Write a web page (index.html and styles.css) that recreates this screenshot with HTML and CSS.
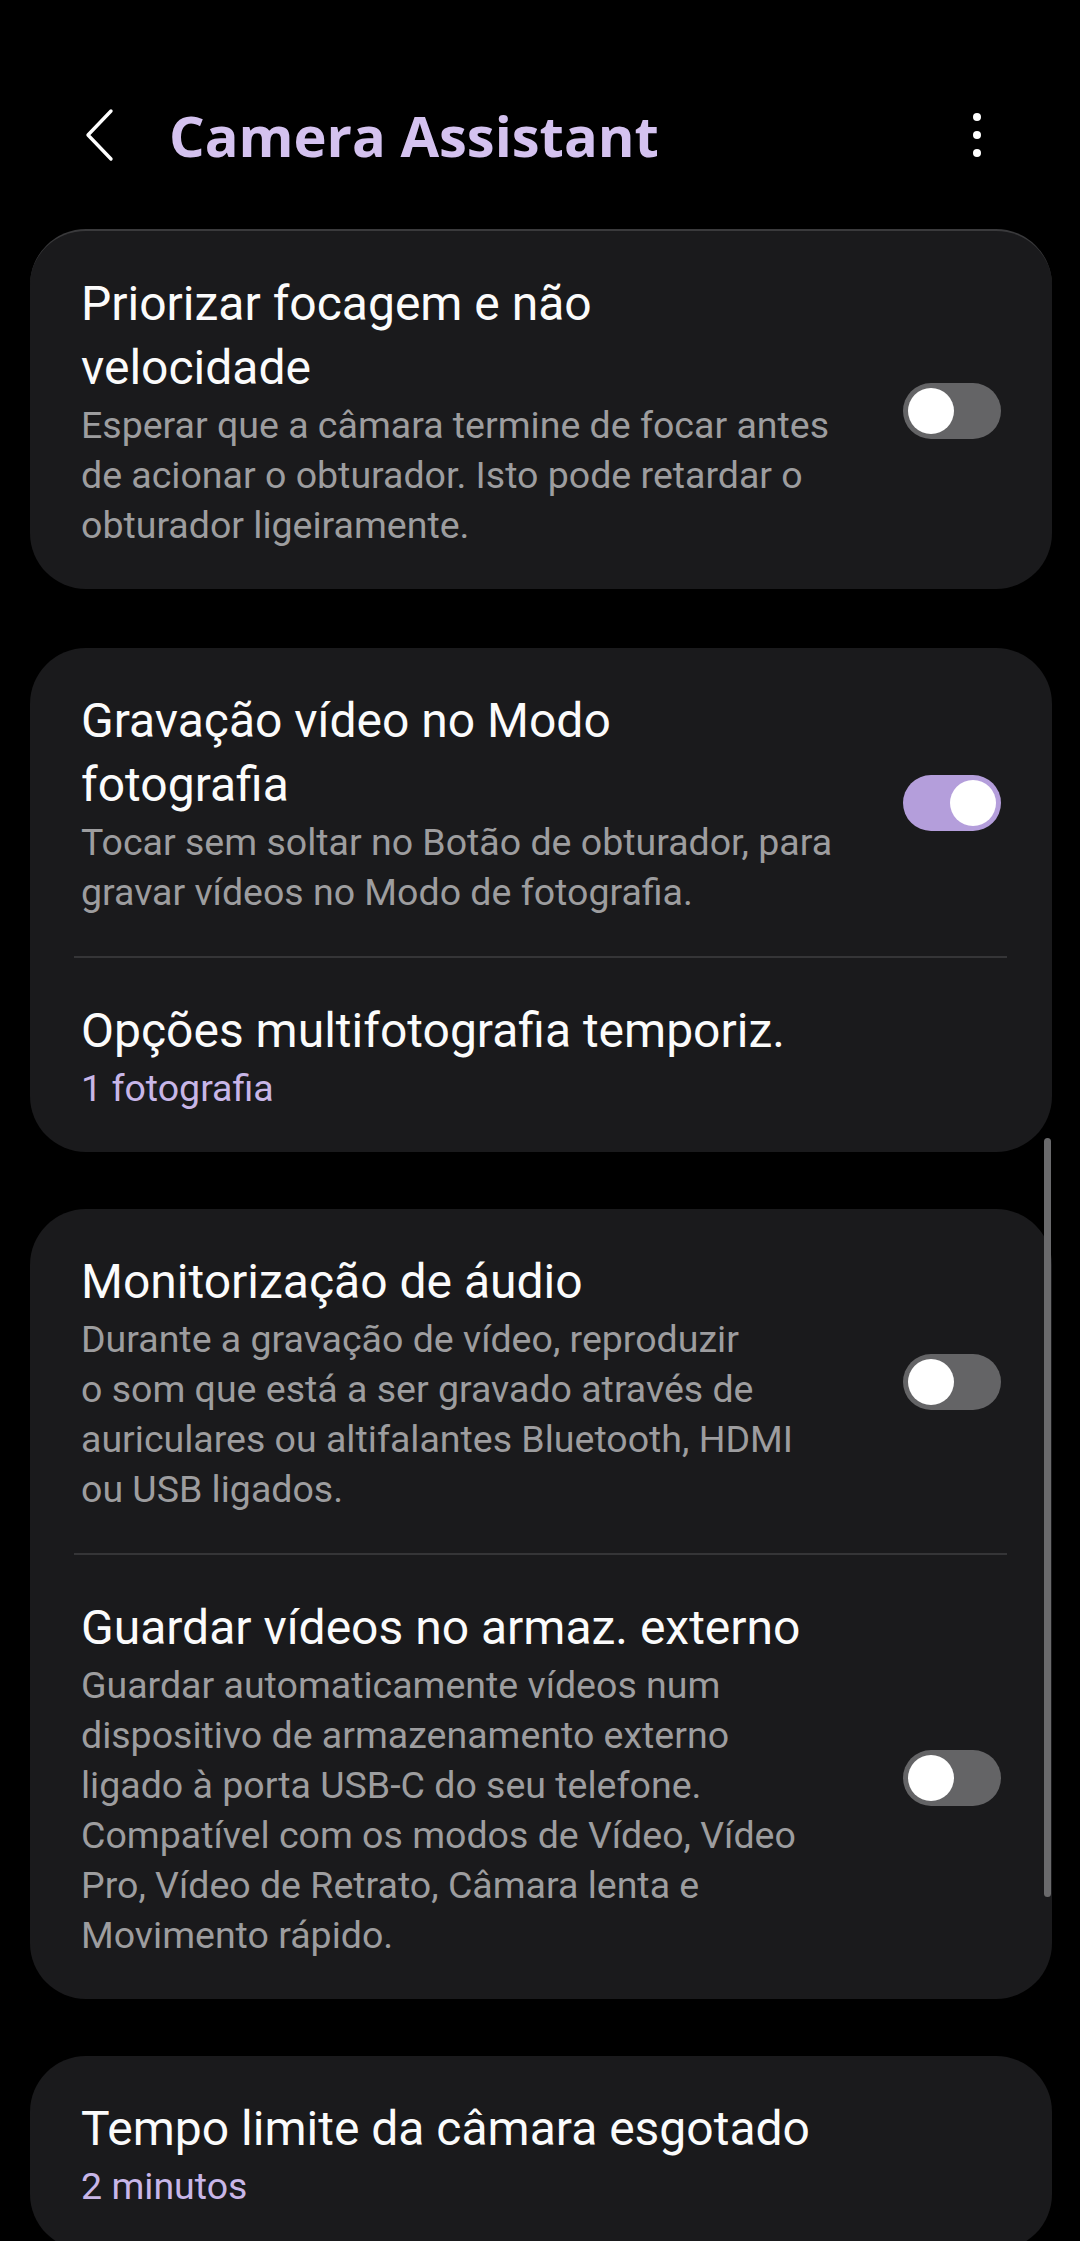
FILE: index.html
```html
<!DOCTYPE html>
<html>
<head>
  <meta charset="utf-8">
  <link rel="stylesheet" href="styles.css">
</head>
<body>
  <div class="screen">
    <header class="app-bar">
      <button class="back" aria-label="Voltar">
        <svg width="30" height="54" viewBox="0 0 30 54">
          <path d="M27 3 L4 27 L27 51" fill="none" stroke="#ffffff" stroke-width="3.4" stroke-linecap="round" stroke-linejoin="round"/>
        </svg>
      </button>
      <h1 class="app-title">Camera Assistant</h1>
      <button class="more" aria-label="Mais opções">
        <span class="dot"></span>
        <span class="dot"></span>
        <span class="dot"></span>
      </button>
    </header>

    <div class="list">
      <section class="card card-first">
        <div class="row">
          <div class="row-text">
            <div class="row-title">Priorizar focagem e não<br>velocidade</div>
            <div class="row-summary">Esperar que a câmara termine de focar antes<br>de acionar o obturador. Isto pode retardar o<br>obturador ligeiramente.</div>
          </div>
          <div class="switch"><span class="knob"></span></div>
        </div>
      </section>

      <section class="card">
        <div class="row">
          <div class="row-text">
            <div class="row-title">Gravação vídeo no Modo<br>fotografia</div>
            <div class="row-summary">Tocar sem soltar no Botão de obturador, para<br>gravar vídeos no Modo de fotografia.</div>
          </div>
          <div class="switch on"><span class="knob"></span></div>
        </div>
        <div class="divider"></div>
        <div class="row">
          <div class="row-text">
            <div class="row-title">Opções multifotografia temporiz.</div>
            <div class="row-value">1 fotografia</div>
          </div>
        </div>
      </section>

      <section class="card">
        <div class="row">
          <div class="row-text">
            <div class="row-title">Monitorização de áudio</div>
            <div class="row-summary">Durante a gravação de vídeo, reproduzir<br>o som que está a ser gravado através de<br>auriculares ou altifalantes Bluetooth, HDMI<br>ou USB ligados.</div>
          </div>
          <div class="switch"><span class="knob"></span></div>
        </div>
        <div class="divider"></div>
        <div class="row">
          <div class="row-text">
            <div class="row-title">Guardar vídeos no armaz. externo</div>
            <div class="row-summary">Guardar automaticamente vídeos num<br>dispositivo de armazenamento externo<br>ligado à porta USB-C do seu telefone.<br>Compatível com os modos de Vídeo, Vídeo<br>Pro, Vídeo de Retrato, Câmara lenta e<br>Movimento rápido.</div>
          </div>
          <div class="switch"><span class="knob"></span></div>
        </div>
      </section>

      <section class="card">
        <div class="row">
          <div class="row-text">
            <div class="row-title">Tempo limite da câmara esgotado</div>
            <div class="row-value">2 minutos</div>
          </div>
        </div>
      </section>
    </div>

    <div class="scrollbar"></div>
  </div>
</body>
</html>
```

FILE: styles.css
```css
body {
  margin: 0;
  padding: 0;
  background: #000;
  font-family: Roboto, "Noto Sans", sans-serif;
  color: #fafafa;
}

.screen {
  position: relative;
  width: 1080px;
  height: 2241px;
  overflow: hidden;
  background: #000;
}

/* top bar */

.app-bar {
  display: flex;
  align-items: center;
  height: 229px;
  padding-top: 41px;
  box-sizing: border-box;
}

.app-bar button {
  background: none;
  border: none;
  padding: 0;
  cursor: pointer;
}

.back {
  display: flex;
  margin-left: 84px;
}

.app-title {
  margin: 0 0 0 55px;
  font-family: "Open Sans", Roboto, sans-serif;
  font-size: 56px;
  line-height: 1;
  font-weight: 700;
  color: #d4c2ef;
  letter-spacing: 0;
}

.more {
  display: flex;
  flex-direction: column;
  gap: 10px;
  margin-left: auto;
  margin-right: 99px;
}

.dot {
  width: 8px;
  height: 8px;
  border-radius: 50%;
  background: #fff;
}

/* cards */

.list {
  overflow: hidden;
}

.card {
  margin: 0 28px 57px 30px;
  background: #1a1a1c;
  border-radius: 56px;
}

.card-first {
  border-top: 2px solid #3a3a3c;
  margin-bottom: 59px;
}

.row {
  display: flex;
  align-items: center;
  padding: 41px 51px 39px 51px;
}

.row-text {
  flex: 1;
  min-width: 0;
}

.row-title {
  font-size: 48px;
  line-height: 64px;
  color: #fbfbfb;
}

.row-summary {
  font-size: 37.5px;
  line-height: 50px;
  color: #9d9d9f;
}

.row-value {
  font-size: 37.5px;
  line-height: 50px;
  color: #c8b6e8;
}

.divider {
  height: 2px;
  margin: 0 45px 0 44px;
  background: #353537;
}

/* switch */

.switch {
  flex: none;
  width: 98px;
  height: 56px;
  margin-left: 40px;
  border-radius: 28px;
  background: #646466;
  box-sizing: border-box;
  padding: 5px;
}

.knob {
  display: block;
  width: 46px;
  height: 46px;
  border-radius: 50%;
  background: #fff;
}

.switch.on {
  background: #b49edb;
}

.switch.on .knob {
  margin-left: auto;
}

.scrollbar {
  position: absolute;
  top: 1138px;
  right: 29px;
  width: 7px;
  height: 759px;
  border-radius: 4px;
  background: #6a6a6c;
}
```
